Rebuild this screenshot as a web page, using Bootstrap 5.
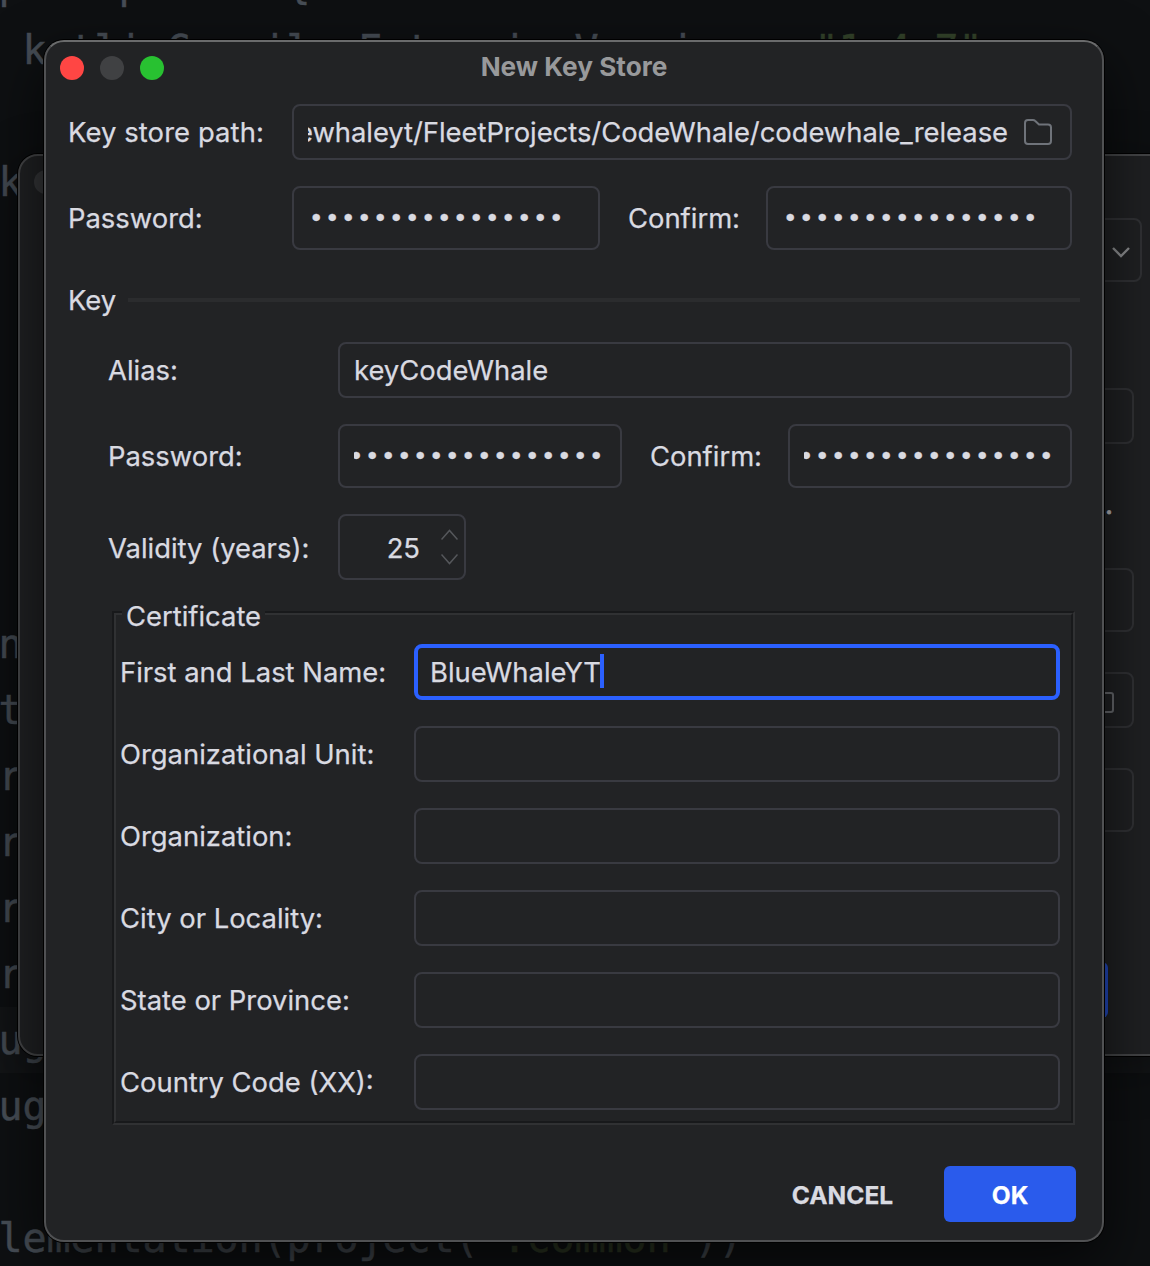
<!DOCTYPE html>
<html lang="en" data-bs-theme="dark">
<head>
<meta charset="utf-8">
<meta name="viewport" content="width=device-width, initial-scale=1">
<title>New Key Store</title>
<link href="https://cdn.jsdelivr.net/npm/bootstrap@5.3.0/dist/css/bootstrap.min.css" rel="stylesheet">
<style>
  body { width: 1150px; height: 1266px; margin: 0; overflow: hidden; background: #0e1012; color: #d9dae1; font-family: Inter, "Liberation Sans", sans-serif; font-size: 27.4px; font-weight: 400; line-height: 32px; }
  .desktop { width: 1150px; height: 1266px; }
  .code { position: absolute; left: -73.5px; top: -49px; margin: 0; width: 1400px; overflow: hidden; font: 40px/66px "DejaVu Sans Mono", monospace; letter-spacing: -.082px; color: #464d55; -webkit-text-stroke: .5px; }
  .code .ln { height: 66px; white-space: pre; }
  .code .str { color: #34442b; }
  .code .dim { color: #41474d; }
  .code .dim .str { color: #2c3622; }
  .code .current { background: #131517; }
  .win { position: absolute; border: 2px solid #505153; border-radius: 20px; }
  .win-back { left: 18px; top: 154px; width: 1152px; height: 902px; background: #1f2022; border-color: #434446; box-shadow: 0 0 0 1px #000, 0 10px 50px rgba(0,0,0,.4); overflow: hidden; }
  .win-front { left: 44px; top: 40px; width: 1060px; height: 1202px; background: #222325; border-top-color: #6a6b6c; box-shadow: 0 0 0 1px #000, 0 22px 60px rgba(0,0,0,.65); }
  .back-col { padding: 62px 0 0; width: 1116px; }
  .back-box { border: 2px solid #303134; border-radius: 8px; width: 200px; flex: none; }
  .back-dot { position: absolute; left: 14px; top: 14px; width: 24px; height: 24px; border-radius: 50%; background: #343537; }
  .titlebar { height: 50px; padding-left: 14px; position: relative; }
  .light { width: 24px; height: 24px; border-radius: 50%; margin: 2px 16px 0 0; }
  .title-text { position: absolute; left: 0; right: 0; top: 9px; text-align: center; font-size: 26.2px; font-weight: 700; color: #98999b; }
  .content { padding: 12px 30px 0 22px; -webkit-text-stroke: .25px; }
  .lbl { flex: none; white-space: nowrap; }
  .field { border: 2px solid #393a41; border-radius: 8px; height: 56px; display: flex; align-items: center; padding: 0 14px; overflow: hidden; white-space: nowrap; }
  .tall { height: 64px; padding-top: 2px; }
  .clip { overflow: hidden; display: flex; flex: 1; min-width: 0; }
  .dots { font: 26.67px/32px "Liberation Mono", monospace; letter-spacing: 0; -webkit-text-stroke: .3px; padding-left: .3px; }
  .focused { border: 4px solid #2b60ff; padding: 0 12px; }
  .caret { width: 4px; height: 34px; background: #2b60ff; margin: -2px 0 0 -1px; }
  .rule { height: 4px; background: #2b2c2e; flex: 1; margin-right: -8px; }
  .cert { margin: 31px -3px 0 44px; width: 963px; height: 514px; position: relative; border: 2px solid #18191b; border-right-color: #303133; border-bottom-color: #303133; padding: 31px 13px 0 6px; }
  .cert::before { content: ""; position: absolute; inset: 0; border: 2px solid #303133; border-right-color: #18191b; border-bottom-color: #18191b; pointer-events: none; }
  .cert-title { position: absolute; left: 8px; top: -13px; background: #222325; padding: 0 4px; z-index: 1; }
  .act { height: 56px; border: 0; border-radius: 6px; font-size: 24.5px; font-weight: 700; line-height: 32px; padding: 2px 0 0; }
  .act-ok { width: 132px; background: #2a5bec; color: #fff; }
  .act-cancel { width: 160px; color: #d9dae1; padding-left: 1px; }
</style>
</head>
<body>
<div class="desktop position-relative overflow-hidden">
  <div class="code"><div class="ln">composeOptions {</div><div class="ln">    kotlinCompilerExtensionVersion = <span class="str">"1.4.7"</span></div><div class="ln"> </div><div class="ln">   k</div><div class="ln"> </div><div class="ln"> </div><div class="ln"> </div><div class="ln"> </div><div class="ln"> </div><div class="ln"> </div><div class="ln">   n</div><div class="ln">   t</div><div class="ln">   r</div><div class="ln">   r</div><div class="ln">   r</div><div class="ln">   r</div><div class="ln current">   ug</div><div class="ln">   ug</div><div class="ln"> </div><div class="ln">   le<span class="dim">mentation(project(<span class="str">":common"</span>))</span></div></div>

  <div class="win win-back">
    <span class="back-dot"></span>
    <div class="back-col d-flex flex-column align-items-end">
      <div class="back-box d-flex align-items-center justify-content-end" style="height:64px;width:300px;margin-right:-6px;padding:3px 9px 0 0">
        <svg width="20" height="14" viewBox="0 0 20 14" fill="none" stroke="#8b8c8e" stroke-width="2.4"><path d="M2 3l8 8 8-8"/></svg>
      </div>
      <div class="back-box" style="height:56px;margin:106px 2px 0 0"></div>
      <div class="lbl" style="height:32px;margin:44px 23px 4px 0;color:#b4b5b8;-webkit-text-stroke:.8px">.</div>
      <div class="back-box" style="height:64px;margin:44px 2px 0 0"></div>
      <div class="back-box d-flex align-items-center justify-content-end" style="height:56px;margin:40px 2px 0 0;padding:2px 18px 0 0">
        <svg width="28" height="24" viewBox="0 0 28 24" fill="none" stroke="#66686c" stroke-width="2"><path d="M1 5V3q0-2 2-2h7l4 3h11q2 0 2 2v15q0 2-2 2H3q-2 0-2-2z"/></svg>
      </div>
      <div class="back-box" style="height:64px;margin:40px 2px 0 0"></div>
      <div class="act-ok rounded-2" style="height:56px;margin:130px 28px 0 0;background:#2148bd"></div>
    </div>
  </div>

  <main class="win win-front">
    <header class="titlebar d-flex align-items-center">
      <span class="light" style="background:#ff4644"></span><span class="light" style="background:#404143"></span><span class="light" style="background:#28c131"></span>
      <div class="title-text">New Key Store</div>
    </header>
    <div class="content">
      <div class="d-flex align-items-center">
        <div class="lbl" style="width:224px;letter-spacing:.1px">Key store path:</div>
        <div class="field flex-fill" style="padding-right:18px">
          <div class="clip justify-content-end"><span style="letter-spacing:-.03px">ewhaleyt/FleetProjects/CodeWhale/codewhale_release</span></div>
          <svg class="flex-shrink-0" style="margin-left:16px" width="28" height="26" viewBox="0 0 28 26" fill="none" stroke="#6f737a" stroke-width="2"><path d="M1 4q0-3 3-3h5q1.200 0 2 .8L15 5.500h9q3 0 3 3V22q0 3-3 3H4q-3 0-3-3z"/></svg>
        </div>
      </div>
      <div class="d-flex align-items-center" style="margin-top:26px">
        <div class="lbl" style="width:224px">Password:</div>
        <div class="field tall" style="width:308px"><div class="clip dots">••••••••••••••••</div></div>
        <div class="lbl" style="width:138px;margin-left:28px">Confirm:</div>
        <div class="field tall flex-fill"><div class="clip dots">••••••••••••••••</div></div>
      </div>
      <div class="d-flex align-items-center" style="margin-top:34px;height:32px">
        <div class="lbl" style="width:60px">Key</div><div class="rule"></div>
      </div>
      <div style="padding-left:40px;margin-top:26px">
        <div class="d-flex align-items-center">
          <div class="lbl" style="width:230px">Alias:</div>
          <div class="field flex-fill">keyCodeWhale</div>
        </div>
        <div class="d-flex align-items-center" style="margin-top:26px">
          <div class="lbl" style="width:230px">Password:</div>
          <div class="field tall" style="width:284px"><div class="clip dots"><span style="margin-left:-6px">••••••••••••••••</span></div></div>
          <div class="lbl" style="width:138px;margin-left:28px">Confirm:</div>
          <div class="field tall flex-fill"><div class="clip dots"><span style="margin-left:-6px">••••••••••••••••</span></div></div>
        </div>
        <div class="d-flex align-items-center" style="margin-top:26px">
          <div class="lbl" style="width:230px;padding-top:1px">Validity (years):</div>
          <div class="field justify-content-end" style="width:128px;height:66px;padding:2px 6px 0 0">25
            <svg style="margin:-2px 0 0 21px" width="17" height="36" viewBox="0 0 17 36" fill="none" stroke="#55575b" stroke-width="1.500"><path d="M.5 10.500l8-9 8 9M.5 25.500l8 9 8-9"/></svg>
          </div>
        </div>
      </div>
      <section class="cert">
        <div class="cert-title text-nowrap">Certificate</div>
        <div class="d-flex flex-column" style="gap:26px">
          <div class="d-flex align-items-center"><div class="lbl" style="width:294px">First and Last Name:</div><div class="field focused flex-fill">BlueWhaleYT<span class="caret"></span></div></div>
          <div class="d-flex align-items-center"><div class="lbl" style="width:294px">Organizational Unit:</div><div class="field flex-fill"></div></div>
          <div class="d-flex align-items-center"><div class="lbl" style="width:294px">Organization:</div><div class="field flex-fill"></div></div>
          <div class="d-flex align-items-center"><div class="lbl" style="width:294px">City or Locality:</div><div class="field flex-fill"></div></div>
          <div class="d-flex align-items-center"><div class="lbl" style="width:294px">State or Province:</div><div class="field flex-fill"></div></div>
          <div class="d-flex align-items-center"><div class="lbl" style="width:294px">Country Code (XX):</div><div class="field flex-fill"></div></div>
        </div>
      </section>
      <div class="d-flex justify-content-end" style="margin:41px -4px 0 0;gap:22px">
        <button class="btn act act-cancel" type="button">CANCEL</button>
        <button class="btn act act-ok" type="button">OK</button>
      </div>
    </div>
  </main>
</div>
<script src="https://cdn.jsdelivr.net/npm/bootstrap@5.3.0/dist/js/bootstrap.bundle.min.js"></script>
</body>
</html>
